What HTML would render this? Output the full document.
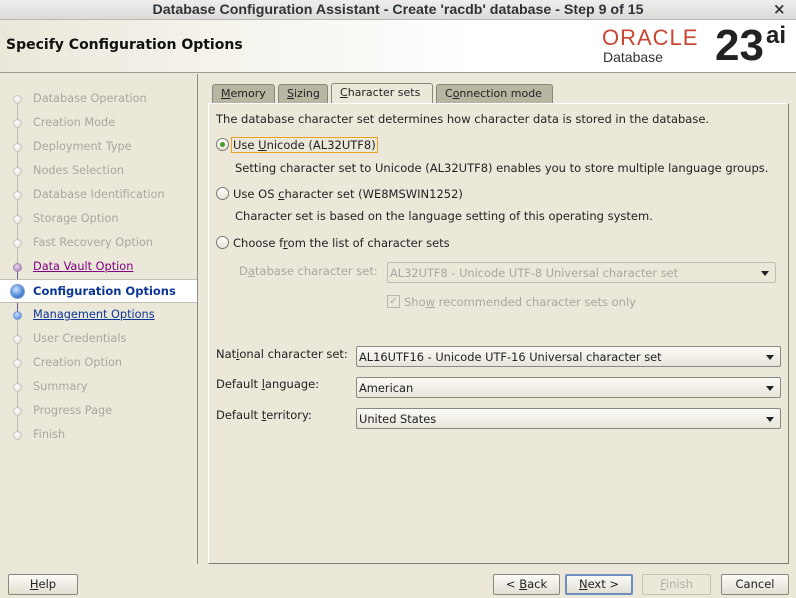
<!DOCTYPE html>
<html><head><style>
*{margin:0;padding:0;box-sizing:border-box}
body{width:796px;height:598px;background:#ebe8da;font-family:"DejaVu Sans",sans-serif;font-size:11.5px;color:#222;position:relative;overflow:hidden}
.a{position:absolute;white-space:nowrap}
u{text-decoration:underline}
.nav{position:absolute;left:33px;color:#a9a79f;font-size:11.3px;white-space:nowrap}
.dot{position:absolute;left:13px;width:9px;height:9px;border-radius:50%;background:radial-gradient(circle at 40% 35%,#fff,#dcdad4);border:1px solid #c8c6bf}
.combo{position:absolute;height:21px;border:1px solid #8c8a80;border-radius:2px;background:linear-gradient(#fbfaf6,#e8e5da);padding:3px 2px;font-size:11.4px;white-space:nowrap}
.combo:after{content:"";position:absolute;right:6px;top:8px;border-left:4px solid transparent;border-right:4px solid transparent;border-top:5px solid #222}
.btn{position:absolute;top:574px;height:21px;border:1px solid #8a877c;border-radius:2px;background:linear-gradient(#fbfaf5,#e2dfd2);text-align:center;line-height:19px;font-size:11.5px}
.radio{position:absolute;left:216px;width:13px;height:13px;border-radius:50%;border:1px solid #7b7970;background:linear-gradient(#fff,#e6e3d8)}
.tab{position:absolute;top:84px;height:19px;border:1px solid #8a877c;border-bottom:none;background:#b8b6a2;padding:2px 0 0 8px;font-size:11px;border-radius:3px 3px 0 0;white-space:nowrap;overflow:hidden}
</style></head><body>
<div class="a" style="left:0;top:0;width:796px;height:20px;background:linear-gradient(#efeeec,#dcdbd8);border-bottom:1px solid #b8b7b3"></div>
<div class="a" style="left:0;top:2px;width:796px;text-align:center;font-size:14.2px;font-weight:bold;color:#2e3436;font-family:'Liberation Sans',sans-serif">Database Configuration Assistant - Create 'racdb' database - Step 9 of 15</div>
<div class="a" style="left:773px;top:0px;font-size:15px;font-weight:bold;color:#2e3436">×</div>
<div class="a" style="left:0;top:20px;width:796px;height:53px;background:linear-gradient(90deg,#ebe8da,#fff 60%);border-bottom:1px solid #9c9a92"></div>
<div class="a" style="left:6px;top:37px;font-size:14px;font-weight:bold;color:#111">Specify Configuration Options</div>
<div class="a" style="left:602px;top:26px;font-size:22px;color:#c74634;letter-spacing:1px;font-family:'Liberation Sans',sans-serif;line-height:24px">ORACLE</div>
<div class="a" style="left:603px;top:49px;font-size:14px;color:#333;font-family:'Liberation Sans',sans-serif">Database</div>
<div class="a" style="left:715px;top:22px;font-size:44px;font-weight:bold;color:#222;font-family:'Liberation Sans',sans-serif;line-height:48px">23</div>
<div class="a" style="left:766px;top:22px;font-size:24px;color:#222;font-family:'Liberation Sans',sans-serif;font-weight:bold">ai</div>
<div class="a" style="left:197px;top:74px;width:1px;height:490px;background:#8e8c84"></div>
<div class="a" style="left:17px;top:104px;width:1px;height:330px;background:#bdbbb3"></div>
<div class="a" style="left:17px;top:268px;width:1px;height:50px;background:#6a5aa0"></div>
<div class="dot" style="top:95px"></div><div class="nav" style="top:92px">Database Operation</div>
<div class="dot" style="top:119px"></div><div class="nav" style="top:116px">Creation Mode</div>
<div class="dot" style="top:143px"></div><div class="nav" style="top:140px">Deployment Type</div>
<div class="dot" style="top:167px"></div><div class="nav" style="top:164px">Nodes Selection</div>
<div class="dot" style="top:191px"></div><div class="nav" style="top:188px">Database Identification</div>
<div class="dot" style="top:215px"></div><div class="nav" style="top:212px">Storage Option</div>
<div class="dot" style="top:239px"></div><div class="nav" style="top:236px">Fast Recovery Option</div>
<div class="dot" style="top:263px;background:radial-gradient(circle at 40% 35%,#e8d8ec,#a07ab0);border-color:#a888b4"></div><div class="nav" style="top:260px;color:#800080;text-decoration:underline">Data Vault Option</div>
<div class="a" style="left:0;top:279px;width:197px;height:24px;background:#fff;border-top:1px solid #c0beb6;border-bottom:1px solid #c0beb6"></div>
<div class="a" style="left:10px;top:284px;width:15px;height:15px;border-radius:50%;border:1px solid #7d9fd0;background:radial-gradient(circle at 40% 35%,#cfe0ff,#4b86d8 60%,#2f5fb0)"></div>
<div class="nav" style="top:284px;color:#0b3596;font-weight:bold;font-size:11.5px">Configuration Options</div>
<div class="dot" style="top:311px;background:radial-gradient(circle at 40% 35%,#cfe0ff,#3a78d8);border-color:#7d9fd0"></div><div class="nav" style="top:308px;color:#0b3596;text-decoration:underline">Management Options</div>
<div class="dot" style="top:335px"></div><div class="nav" style="top:332px">User Credentials</div>
<div class="dot" style="top:359px"></div><div class="nav" style="top:356px">Creation Option</div>
<div class="dot" style="top:383px"></div><div class="nav" style="top:380px">Summary</div>
<div class="dot" style="top:407px"></div><div class="nav" style="top:404px">Progress Page</div>
<div class="dot" style="top:431px"></div><div class="nav" style="top:428px">Finish</div>

<div class="a" style="left:208px;top:103px;width:581px;height:461px;border:1px solid #8a877c;border-top-color:#fff;border-left-color:#fff;border-right-color:#808078;border-bottom-color:#808078"></div>
<div class="tab" style="left:212px;width:63px"><u>M</u>emory</div>
<div class="tab" style="left:278px;width:50px"><u>S</u>izing</div>
<div class="tab" style="left:331px;width:102px;background:#ebe8da;height:20px;top:83px"><u>C</u>haracter sets</div>
<div class="tab" style="left:436px;width:117px">C<u>o</u>nnection mode</div>
<div class="a" style="left:216px;top:112px">The database character set determines how character data is stored in the database.</div>
<div class="radio" style="top:138px"><div style="position:absolute;left:3px;top:3px;width:5px;height:5px;border-radius:50%;background:#4a9a2a"></div></div>
<div class="a" style="left:231px;top:137px;border:1px solid #f0a020;padding:0 1px">Use <u>U</u>nicode (AL32UTF8)</div>
<div class="a" style="left:235px;top:161px">Setting character set to Unicode (AL32UTF8) enables you to store multiple language groups.</div>
<div class="radio" style="top:187px"></div>
<div class="a" style="left:233px;top:187px">Use OS <u>c</u>haracter set (WE8MSWIN1252)</div>
<div class="a" style="left:235px;top:209px">Character set is based on the language setting of this operating system.</div>
<div class="radio" style="top:236px"></div>
<div class="a" style="left:233px;top:236px">Choose f<u>r</u>om the list of character sets</div>
<div class="a" style="left:239px;top:264px;color:#a9a79f">D<u>a</u>tabase character set:</div>
<div class="combo" style="left:387px;top:262px;width:389px;color:#a9a79f;border-color:#c0beb4;background:#ebe8da">AL32UTF8 - Unicode UTF-8 Universal character set</div>
<div class="a" style="left:387px;top:295px;width:13px;height:13px;border:1px solid #b8b6ac;color:#a9a79f;font-size:10px;line-height:11px;text-align:center">✓</div>
<div class="a" style="left:404px;top:295px;color:#a9a79f">Sho<u>w</u> recommended character sets only</div>
<div class="a" style="left:216px;top:347px">Nat<u>i</u>onal character set:</div>
<div class="combo" style="left:356px;top:346px;width:425px">AL16UTF16 - Unicode UTF-16 Universal character set</div>
<div class="a" style="left:216px;top:377px">Default <u>l</u>anguage:</div>
<div class="combo" style="left:356px;top:377px;width:425px">American</div>
<div class="a" style="left:216px;top:408px">Default <u>t</u>erritory:</div>
<div class="combo" style="left:356px;top:408px;width:425px">United States</div>

<div class="btn" style="left:8px;width:70px"><u>H</u>elp</div>
<div class="btn" style="left:493px;width:67px">&lt; <u>B</u>ack</div>
<div class="btn" style="left:565px;width:68px;border-color:#6f8ec0;border-width:2px;line-height:17px"><u>N</u>ext &gt;</div>
<div class="btn" style="left:642px;width:69px;color:#b0aea4;border-color:#c4c2b6;background:#ebe8da"><u>F</u>inish</div>
<div class="btn" style="left:721px;width:68px">Cancel</div>
</body></html>
